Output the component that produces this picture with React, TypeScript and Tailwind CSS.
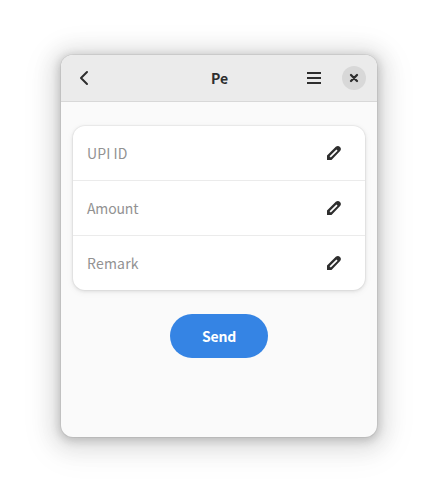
const fields = [
  { label: 'UPI ID', tracking: 'tracking-[0.1px]' },
  { label: 'Amount', tracking: 'tracking-[-0.15px]' },
  { label: 'Remark', tracking: 'tracking-[0.2px]' },
];

function Pencil() {
  return (
    <svg width="16" height="16" viewBox="0 0 16 16" aria-hidden="true">
      <path
        fill="#2e2e2e"
        fillRule="evenodd"
        d="M1 15v-4.6L9.8 1.8c1.4-1.2 3-1.1 4.2.1 1.2 1.2 1.2 2.8.1 4.2L5.5 15H1zM3.6 11.3l1.2 1.2 6.8-6.8-1.2-1.2-6.8 6.8z"
      />
    </svg>
  );
}

export default function App() {
  return (
    <div className="h-[504px] w-[438px] overflow-hidden bg-white px-[61px] pt-[55px] font-['Noto_Sans_CJK_SC','Open_Sans',sans-serif] text-[14px] leading-5 text-[#2e2e2e]">
      <main className="flex h-[382px] w-[316px] flex-col overflow-hidden rounded-xl bg-[#fafafa] shadow-[0_2px_8px_2px_rgba(0,0,0,0.17),0_3px_20px_10px_rgba(0,0,0,0.09),0_6px_32px_16px_rgba(0,0,0,0.04),0_0_0_1px_rgba(0,0,0,0.05)]">
        <header className="grid h-[47px] shrink-0 grid-cols-[1fr_auto_1fr] items-center border-b border-[#d8d8d8] bg-[#ebebeb] pr-[11px] pl-[15px]">
          <button aria-label="Back" className="size-4">
            <svg width="16" height="16" viewBox="0 0 16 16" fill="none" stroke="#2e2e2e" strokeWidth="2" strokeLinecap="round" strokeLinejoin="round">
              <path d="M11 2 5 8l6 6" />
            </svg>
          </button>
          <h1 className="-ml-[3px] font-bold">Pe</h1>
          <div className="flex items-center justify-end gap-[21px]">
            <button aria-label="Menu" className="flex w-3.5 flex-col gap-[3px]">
              <span className="h-0.5 w-3.5 bg-[#2e2e2e]" />
              <span className="h-0.5 w-3.5 bg-[#2e2e2e]" />
              <span className="h-0.5 w-3.5 bg-[#2e2e2e]" />
            </button>
            <button aria-label="Close" className="grid size-6 place-items-center rounded-full bg-[#d8d8d8]">
              <svg width="8" height="8" viewBox="0 0 8 8" stroke="#2e2e2e" strokeWidth="2.3" strokeLinecap="round" className="overflow-visible">
                <path d="m1 1 6 6M7 1 1 7" />
              </svg>
            </button>
          </div>
        </header>
        <section className="flex flex-col items-center gap-6 px-3 pt-6">
          <div className="w-full divide-y divide-[#ebebeb] overflow-hidden rounded-xl bg-white shadow-[0_0_0_1px_rgba(0,0,0,0.03),0_1px_3px_1px_rgba(0,0,0,0.07),0_2px_6px_2px_rgba(0,0,0,0.03)]">
            {fields.map((field) => (
              <div key={field.label} className="flex h-[55px] items-center justify-between pr-[23px] pl-3.5 last:h-[54px]">
                <span className={`text-[#929292] ${field.tracking}`}>{field.label}</span>
                <Pencil />
              </div>
            ))}
          </div>
          <button className="flex h-11 w-[98px] items-center justify-center rounded-full bg-[#3584e4] font-bold tracking-[-0.2px] text-white">
            Send
          </button>
        </section>
      </main>
    </div>
  );
}
